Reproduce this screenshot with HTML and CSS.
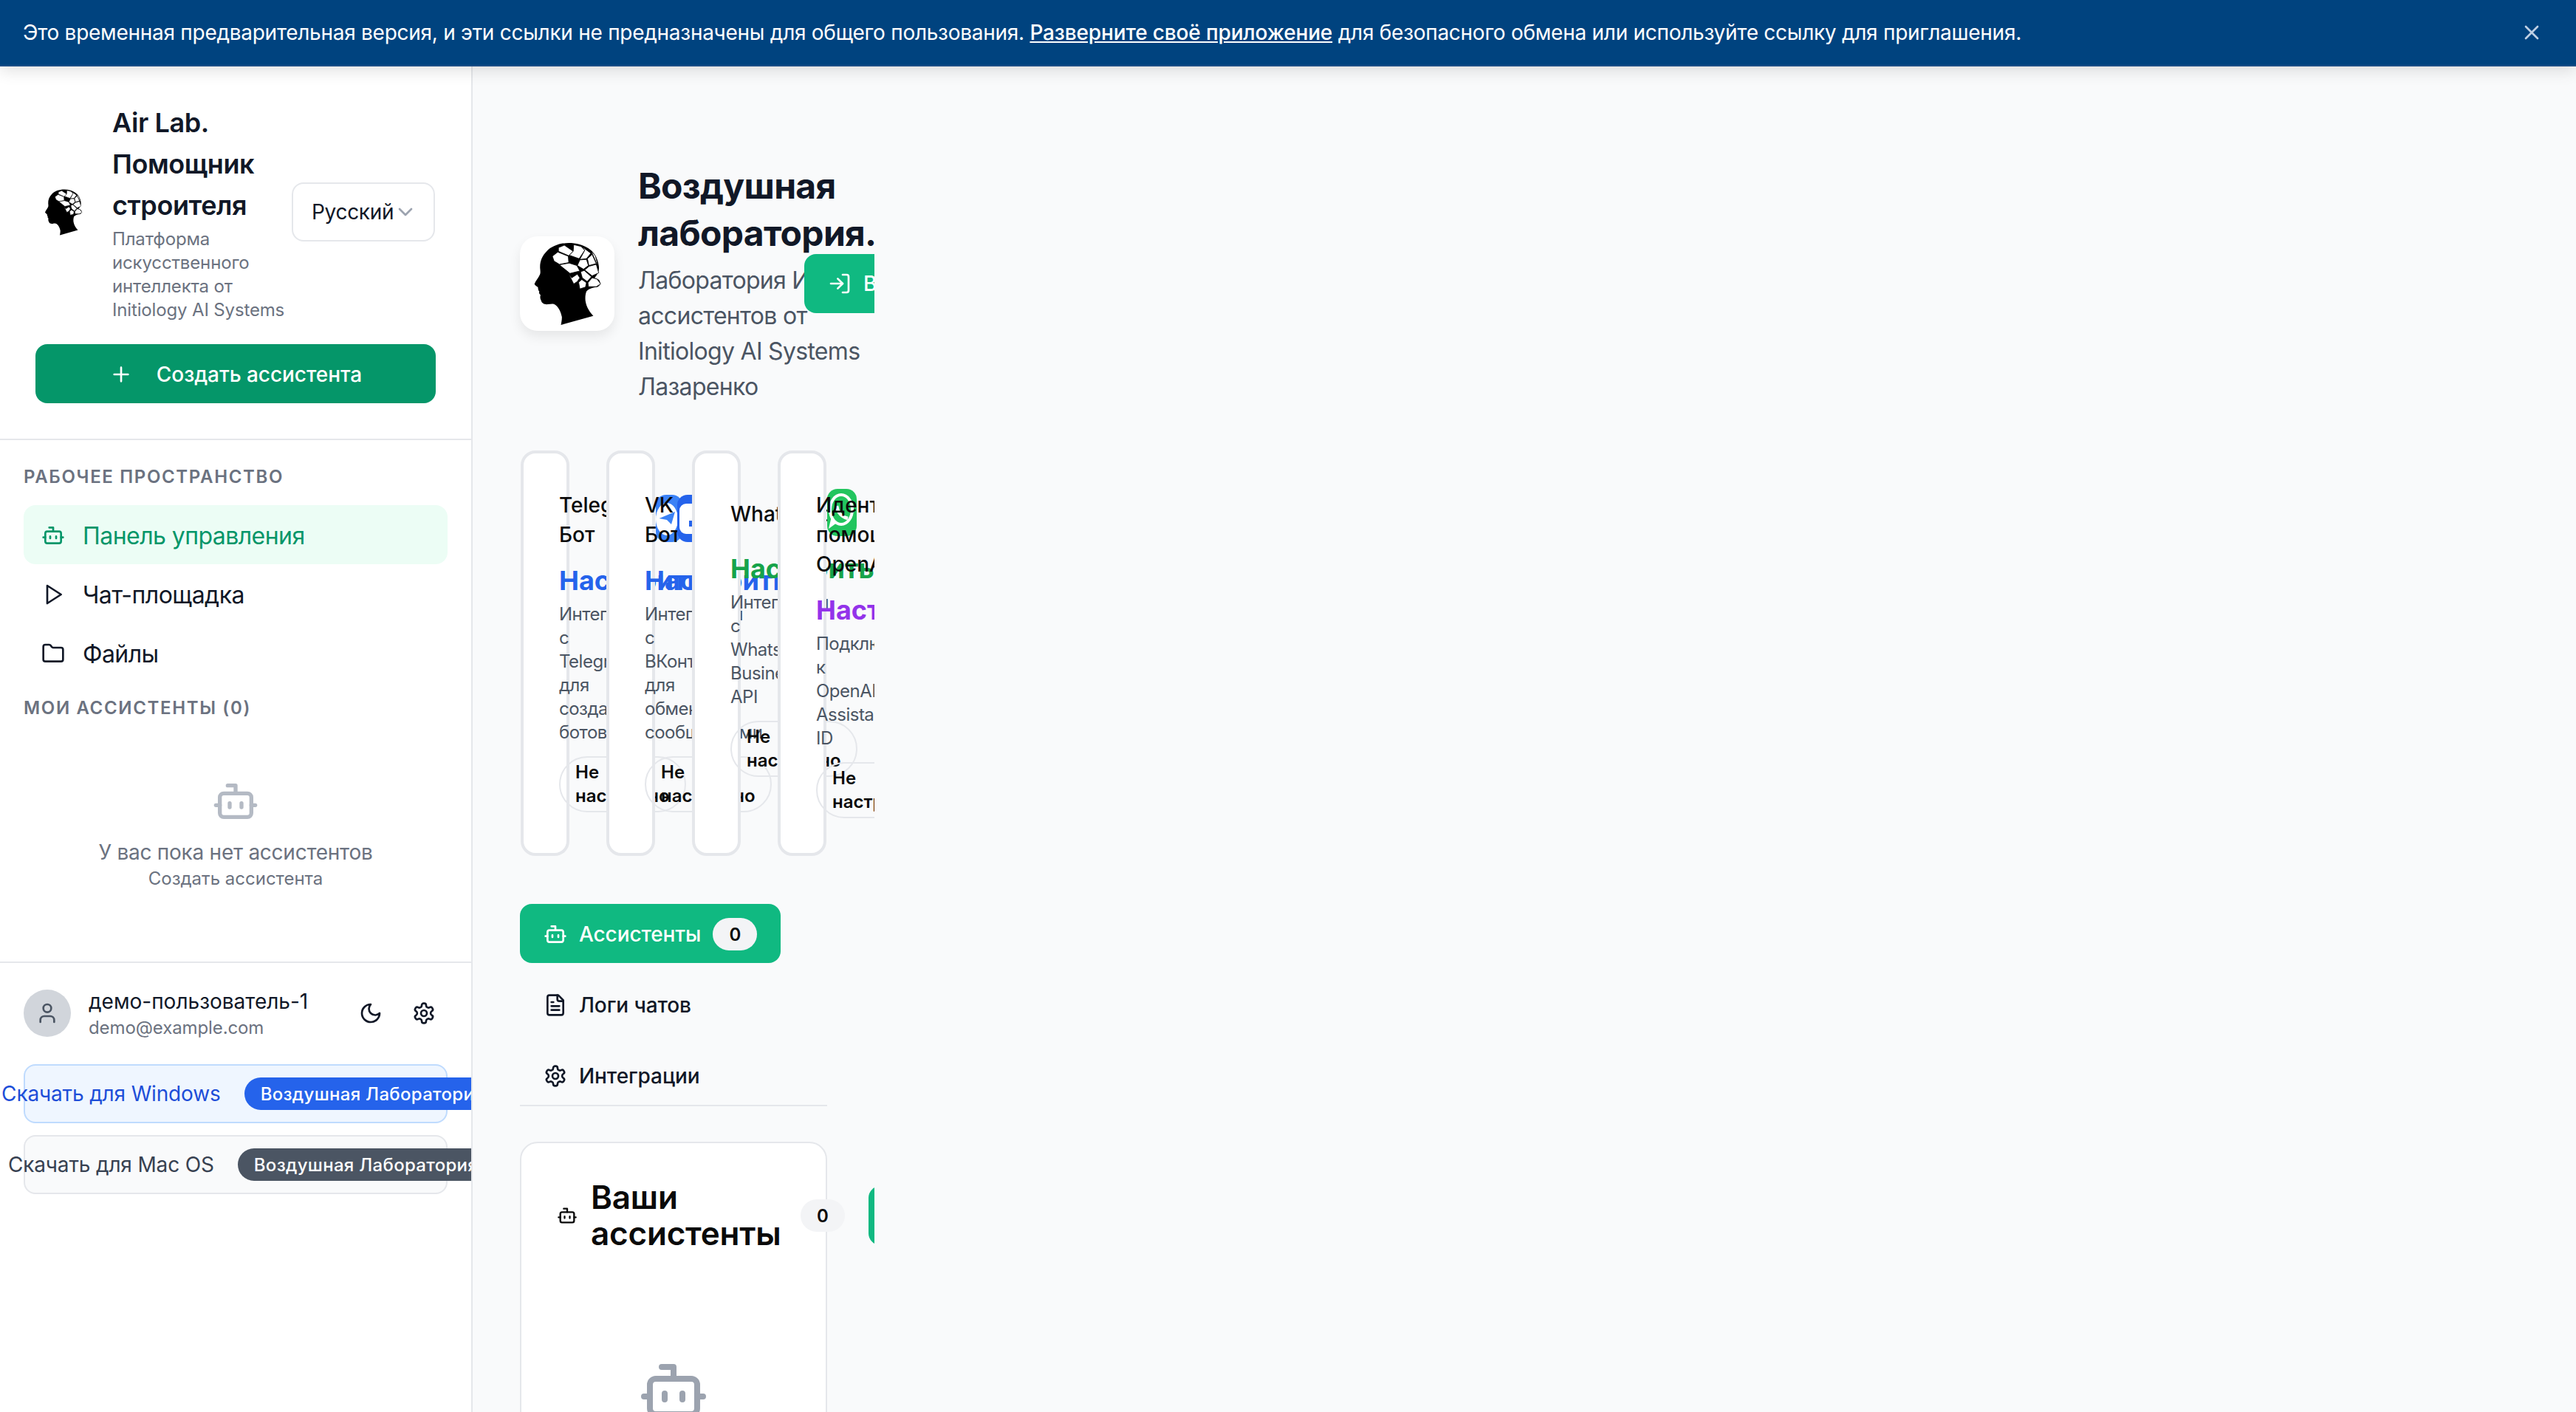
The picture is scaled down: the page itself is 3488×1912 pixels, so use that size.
FILE: index.html
```html
<!DOCTYPE html>
<html lang="ru">
<head>
  <meta charset="UTF-8" />
  <meta name="viewport" content="width=device-width, initial-scale=1.0" />
  <title>Воздушная лаборатория</title>
  <link rel="stylesheet" href="styles.css">
</head>
<body>
  <svg class="sprite" aria-hidden="true">
    <symbol id="i-bot" viewBox="0 0 24 24"><path d="M12 8V4H8"/><rect x="4" y="8" width="16" height="12" rx="2"/><path d="M2 14h2M20 14h2M15 13v2M9 13v2"/></symbol>
    <symbol id="i-play" viewBox="0 0 24 24"><polygon points="6 3 20 12 6 21 6 3"/></symbol>
    <symbol id="i-folder" viewBox="0 0 24 24"><path d="M20 20a2 2 0 0 0 2-2V8a2 2 0 0 0-2-2h-7.9a2 2 0 0 1-1.69-.9L9.6 3.9A2 2 0 0 0 7.93 3H4a2 2 0 0 0-2 2v13a2 2 0 0 0 2 2Z"/></symbol>
    <symbol id="i-moon" viewBox="0 0 24 24"><path d="M12 3a6 6 0 0 0 9 9 9 9 0 1 1-9-9Z"/></symbol>
    <symbol id="i-gear" viewBox="0 0 24 24"><path d="M12.22 2h-.44a2 2 0 0 0-2 2v.18a2 2 0 0 1-1 1.73l-.43.25a2 2 0 0 1-2 0l-.15-.08a2 2 0 0 0-2.73.73l-.22.38a2 2 0 0 0 .73 2.73l.15.1a2 2 0 0 1 1 1.72v.51a2 2 0 0 1-1 1.74l-.15.09a2 2 0 0 0-.73 2.73l.22.38a2 2 0 0 0 2.73.73l.15-.08a2 2 0 0 1 2 0l.43.25a2 2 0 0 1 1 1.73V20a2 2 0 0 0 2 2h.44a2 2 0 0 0 2-2v-.18a2 2 0 0 1 1-1.73l.43-.25a2 2 0 0 1 2 0l.15.08a2 2 0 0 0 2.73-.73l.22-.39a2 2 0 0 0-.73-2.73l-.15-.08a2 2 0 0 1-1-1.74v-.5a2 2 0 0 1 1-1.74l.15-.09a2 2 0 0 0 .73-2.73l-.22-.38a2 2 0 0 0-2.73-.73l-.15.08a2 2 0 0 1-2 0l-.43-.25a2 2 0 0 1-1-1.73V4a2 2 0 0 0-2-2z"/><circle cx="12" cy="12" r="3"/></symbol>
    <symbol id="i-plus" viewBox="0 0 24 24"><path d="M5 12h14M12 5v14"/></symbol>
    <symbol id="i-login" viewBox="0 0 24 24"><path d="M15 3h4a2 2 0 0 1 2 2v14a2 2 0 0 1-2 2h-4"/><polyline points="10 17 15 12 10 7"/><line x1="15" y1="12" x2="3" y2="12"/></symbol>
    <symbol id="i-user" viewBox="0 0 24 24"><path d="M19 21v-2a4 4 0 0 0-4-4H9a4 4 0 0 0-4 4v2"/><circle cx="12" cy="7" r="4"/></symbol>
    <symbol id="i-chevron" viewBox="0 0 24 24"><path d="m6 9 6 6 6-6"/></symbol>
    <symbol id="i-file" viewBox="0 0 24 24"><path d="M15 2H6a2 2 0 0 0-2 2v16a2 2 0 0 0 2 2h12a2 2 0 0 0 2-2V7Z"/><path d="M14 2v4a2 2 0 0 0 2 2h4"/><path d="M10 9H8M16 13H8M16 17H8"/></symbol>
    <symbol id="i-x" viewBox="0 0 24 24"><path d="M18 6 6 18M6 6l12 12"/></symbol>
    <symbol id="i-head" viewBox="105 375 280 340">
      <path fill="#000" d="M250 378 C215 378 180 390 160 412 C140 432 132 455 133 480 C134 490 135 497 133 505 C128 518 116 530 110 545 C112 552 122 555 125 560 C124 567 127 572 130 576 C127 582 131 587 135 590 C132 598 134 606 137 612 C140 624 150 629 165 628 C178 626 188 624 195 630 C210 642 218 660 222 680 C222 692 220 702 218 712 L350 675 C336 660 322 640 318 615 C316 600 318 585 322 575 C335 562 350 560 366 558 C380 552 382 535 370 526 C364 522 358 522 355 520 C368 505 376 490 372 470 C368 440 352 415 330 400 C305 384 280 378 250 378 Z"/>
      <g fill="#fff" stroke="#000" stroke-width="2.5" stroke-linejoin="round">
        <polygon points="183,432 205,415 248,432 250,458 212,465 190,452"/>
        <polygon points="208,397 232,387 268,412 250,430 208,412"/>
        <polygon points="270,385 300,392 315,408 292,442 252,428 268,412"/>
        <polygon points="302,392 340,420 322,442 295,445 315,408"/>
        <polygon points="295,447 322,445 330,470 310,485 285,470"/>
        <polygon points="326,442 345,425 362,462 332,470"/>
        <polygon points="252,460 283,470 295,492 255,502 225,478 212,467"/>
        <polygon points="333,473 362,465 372,500 345,512 315,488"/>
        <polygon points="298,495 313,490 342,516 325,535 305,520"/>
        <polygon points="250,505 262,520 285,505 295,520 285,535 270,545"/>
        <polygon points="290,538 303,527 322,540 318,558 295,565"/>
        <polygon points="328,540 345,520 365,525 380,545 362,556 330,556"/>
        <polygon points="342,410 358,430 368,465 363,460 347,424"/>
      </g>
    </symbol>
  </svg>

  <div class="banner">
    <p class="banner-text">Это временная предварительная версия, и эти ссылки не предназначены для общего пользования. <a href="#">Разверните своё приложение</a> для безопасного обмена или используйте ссылку для приглашения.</p>
    <svg class="icon banner-close"><use href="#i-x"/></svg>
  </div>

  <div class="layout">
    <aside class="sidebar">
      <div class="side-top">
        <div class="brand">
          <div class="brand-logo"><svg class="head-small"><use href="#i-head"/></svg></div>
          <div class="brand-text">
            <h1>Air Lab. Помощник строителя</h1>
            <p>Платформа искусственного интеллекта от Initiology AI Systems</p>
          </div>
          <div class="lang">Русский<svg class="icon lang-chevron"><use href="#i-chevron"/></svg></div>
        </div>
        <button class="create-btn"><svg class="icon"><use href="#i-plus"/></svg>Создать ассистента</button>
      </div>

      <nav class="side-nav">
        <div class="side-label">Рабочее пространство</div>
        <a class="nav-item active" href="#"><svg class="icon"><use href="#i-bot"/></svg>Панель управления</a>
        <a class="nav-item" href="#"><svg class="icon"><use href="#i-play"/></svg>Чат-площадка</a>
        <a class="nav-item" href="#"><svg class="icon"><use href="#i-folder"/></svg>Файлы</a>
        <div class="side-label side-label-2">Мои ассистенты (0)</div>
        <div class="side-empty">
          <svg class="icon empty-icon"><use href="#i-bot"/></svg>
          <p class="empty-title">У вас пока нет ассистентов</p>
          <p class="empty-sub">Создать ассистента</p>
        </div>
      </nav>

      <div class="side-foot">
        <div class="user-row">
          <div class="avatar"><svg class="icon"><use href="#i-user"/></svg></div>
          <div class="user-info">
            <div class="user-name">демо-пользователь-1</div>
            <div class="user-mail">demo@example.com</div>
          </div>
          <div class="user-actions">
            <span class="user-btn"><svg class="icon"><use href="#i-moon"/></svg></span>
            <span class="user-btn"><svg class="icon"><use href="#i-gear"/></svg></span>
          </div>
        </div>
        <div class="dl-btn dl-win">Скачать для Windows<span class="dl-tag">Воздушная Лаборатория</span></div>
        <div class="dl-btn dl-mac">Скачать для Mac OS<span class="dl-tag">Воздушная Лаборатория</span></div>
      </div>
    </aside>

    <main class="main">
      <div class="content">
        <header class="page-head">
          <div class="page-logo"><svg class="head-big"><use href="#i-head"/></svg></div>
          <div class="page-title">
            <h2>Воздушная лаборатория.</h2>
            <p>Лаборатория ИИ ассистентов от Initiology AI Systems Лазаренко</p>
          </div>
          <button class="login-btn"><svg class="icon"><use href="#i-login"/></svg>Войти</button>
        </header>

        <section class="cards">
          <article class="card card-tg">
            <div class="card-top">
              <div class="card-title">Telegram Бот</div>
              <svg class="card-icon" viewBox="0 0 36 64"><rect width="36" height="64" rx="14" fill="#3b82f6"/><ellipse cx="15" cy="33" rx="15" ry="22" fill="#fff"/><polygon points="4.5,32 26,23 21,40 15,34" fill="#3b82f6"/></svg>
            </div>
            <div class="card-value val-blue">Настроить</div>
            <p class="card-desc">Интеграция с Telegram для создания ботов</p>
            <div class="pill">Не настроено</div>
          </article>
          <article class="card card-vk">
            <div class="card-top">
              <div class="card-title">VK Бот</div>
              <svg class="card-icon" viewBox="0 0 40 64"><rect width="40" height="64" rx="14" fill="#2563eb"/><rect x="3" y="12" width="37" height="41" rx="9" fill="#fff"/><rect x="16" y="35" width="4" height="8" fill="#2563eb"/></svg>
            </div>
            <div class="card-value val-blue">Настроить</div>
            <p class="card-desc">Интеграция с ВКонтакте для обмена сообщениями</p>
            <div class="pill">Не настроено</div>
          </article>
          <article class="card card-wa">
            <div class="card-top">
              <div class="card-title">WhatsApp</div>
              <svg class="card-icon" viewBox="0 0 40 64"><rect width="40" height="64" rx="14" fill="#22c55e"/><ellipse cx="19" cy="28" rx="15" ry="20" fill="none" stroke="#fff" stroke-width="4"/><polygon points="2,54 6,37 13,46" fill="#fff"/><path d="M13 23 C14 32 20 38 28 40" fill="none" stroke="#fff" stroke-width="4.5"/></svg>
            </div>
            <div class="card-value val-green">Настроить</div>
            <p class="card-desc">Интеграция с WhatsApp Business API</p>
            <div class="pill">Не настроено</div>
          </article>
          <article class="card">
            <div class="card-top">
              <div class="card-title">Идентификатор помощника OpenAI</div>
            </div>
            <div class="card-value val-purple">Настроить</div>
            <p class="card-desc">Подключите к OpenAI Assistant ID</p>
            <div class="pill">Не настроено</div>
          </article>
        </section>

        <div class="tabs">
          <a class="tab active" href="#"><svg class="icon"><use href="#i-bot"/></svg>Ассистенты<span class="count">0</span></a>
          <a class="tab" href="#"><svg class="icon"><use href="#i-file"/></svg>Логи чатов</a>
          <a class="tab" href="#"><svg class="icon"><use href="#i-gear"/></svg>Интеграции</a>
        </div>

        <section class="panel">
          <div class="panel-head">
            <svg class="icon panel-icon"><use href="#i-bot"/></svg>
            <h3>Ваши ассистенты</h3>
            <span class="count">0</span>
            <button class="panel-btn"></button>
          </div>
          <svg class="icon panel-empty"><use href="#i-bot"/></svg>
        </section>
      </div>
    </main>
  </div>
</body>
</html>
```

FILE: styles.css
```css
* {
  box-sizing: border-box;
  margin: 0;
  padding: 0;
}

html, body {
  height: 1912px;
  overflow: hidden;
}

body {
  font-family: Inter, 'Noto Sans', sans-serif;
  background-color: #f9fafb;
  color: #111827;
  display: flex;
  flex-direction: column;
}

a {
  color: inherit;
  text-decoration: none;
}

button {
  font-family: inherit;
  border: none;
}

.sprite {
  width: 0;
  height: 0;
  position: absolute;
}

.icon {
  width: 32px;
  height: 32px;
  flex: none;
  fill: none;
  stroke: currentColor;
  stroke-width: 2;
  stroke-linecap: round;
  stroke-linejoin: round;
}

/* top banner */
.banner {
  height: 90px;
  flex: none;
  background-color: #00437f;
  border-bottom: 2px solid #1c4f87;
  box-shadow: 0 6px 20px rgba(0, 0, 0, 0.12);
  color: #ffffff;
  display: flex;
  align-items: center;
  justify-content: space-between;
  padding: 0 44px 0 31px;
  position: relative;
  z-index: 5;
}

.banner-text {
  font-size: 28px;
  line-height: 40px;
  letter-spacing: -0.27px;
}

.banner-text a {
  font-weight: 500;
  letter-spacing: -0.15px;
  text-decoration: underline;
}

.banner-close {
  color: #bfd0e4;
}

.layout {
  display: flex;
  flex: 1;
  min-height: 0;
}

/* sidebar */
.sidebar {
  width: 640px;
  flex: none;
  background-color: #ffffff;
  border-right: 2px solid #e5e7eb;
  overflow: hidden;
}

.side-top {
  padding: 48px;
  border-bottom: 2px solid #e5e7eb;
  height: 506px;
}

.brand {
  display: flex;
  align-items: center;
}

.brand-logo {
  width: 76px;
  margin-right: 28px;
  flex: none;
  display: flex;
  justify-content: center;
}

.head-small {
  width: 52px;
  height: 63px;
}

.brand-text {
  width: 235px;
  flex: none;
  margin-right: 8px;
}

.brand-text h1 {
  font-size: 36px;
  line-height: 56px;
  font-weight: 600;
  letter-spacing: -0.4px;
}

.brand-text p {
  margin-top: 2px;
  font-size: 24px;
  line-height: 32px;
  letter-spacing: -0.15px;
  color: #6b7280;
}

.lang {
  width: 194px;
  height: 80px;
  flex: none;
  border: 2px solid #e5e7eb;
  border-radius: 16px;
  display: flex;
  align-items: center;
  padding-left: 25px;
  font-size: 28px;
  letter-spacing: -0.3px;
}

.lang-chevron {
  color: #9ca3af;
}

.create-btn {
  margin-top: 30px;
  width: 542px;
  height: 80px;
  padding-top: 2px;
  background-color: #059669;
  color: #ffffff;
  border-radius: 16px;
  font-size: 28px;
  font-weight: 500;
  letter-spacing: -0.05px;
  display: flex;
  align-items: center;
  justify-content: center;
  gap: 32px;
}

.side-nav {
  height: 706px;
  padding: 34px 32px 0;
}

.side-label {
  font-size: 24px;
  line-height: 32px;
  font-weight: 600;
  letter-spacing: 1.65px;
  text-transform: uppercase;
  color: #6b7280;
  margin-bottom: 22px;
}

.side-label-2 {
  margin-top: 19px;
}

.nav-item {
  height: 80px;
  display: flex;
  align-items: center;
  gap: 24px;
  padding: 2px 0 0 24px;
  border-radius: 16px;
  font-size: 32px;
  letter-spacing: -0.55px;
  color: #111827;
}

.nav-item.active {
  background-color: #ecfdf5;
  color: #059669;
}

.side-empty {
  margin-top: 78px;
  text-align: center;
}

.empty-icon {
  width: 64px;
  height: 64px;
  color: #b4bac4;
}

.empty-title {
  margin-top: 13px;
  font-size: 28px;
  line-height: 40px;
  letter-spacing: -0.25px;
  color: #6b7280;
}

.empty-sub {
  font-size: 24px;
  line-height: 32px;
  color: #6b7280;
}

.side-foot {
  border-top: 2px solid #e5e7eb;
  padding: 32px 32px 0;
}

.user-row {
  display: flex;
  align-items: center;
  gap: 24px;
  margin-bottom: 33px;
}

.avatar {
  width: 64px;
  height: 64px;
  flex: none;
  border-radius: 50%;
  background-color: #d1d5db;
  color: #4b5563;
  display: flex;
  align-items: center;
  justify-content: center;
}

.user-name {
  font-size: 28px;
  line-height: 40px;
}

.user-mail {
  font-size: 24px;
  line-height: 32px;
  letter-spacing: -0.1px;
  color: #6b7280;
}

.user-actions {
  margin-left: auto;
  display: flex;
  gap: 8px;
}

.user-btn {
  width: 64px;
  height: 64px;
  display: flex;
  align-items: center;
  justify-content: center;
}

.dl-btn {
  height: 80px;
  width: 574px;
  border: 2px solid;
  border-radius: 16px;
  margin-bottom: 16px;
  display: flex;
  align-items: center;
  justify-content: center;
  gap: 32px;
  padding-left: 42px;
  font-size: 28px;
  letter-spacing: -0.15px;
  white-space: nowrap;
}

.dl-tag {
  height: 44px;
  flex: none;
  padding: 0 22px;
  border-radius: 22px;
  color: #ffffff;
  font-size: 24px;
  font-weight: 500;
  letter-spacing: 0.3px;
  display: flex;
  align-items: center;
}

.dl-win {
  background-color: #eff6ff;
  border-color: #bfdbfe;
  color: #1d4ed8;
}

.dl-win .dl-tag {
  background-color: #2563eb;
}

.dl-mac {
  background-color: #f9fafb;
  border-color: #e5e7eb;
  color: #374151;
}

.dl-mac .dl-tag {
  background-color: #4b5563;
}

/* main */
.main {
  flex: 1;
  padding: 130px 0 0 40px;
  min-width: 0;
}

.content {
  width: 504px;
  height: 1700px;
  padding-left: 24px;
  overflow: hidden;
}

.page-head {
  display: flex;
  align-items: center;
}

.page-logo {
  width: 128px;
  height: 128px;
  flex: none;
  background-color: #ffffff;
  border-radius: 24px;
  box-shadow: 0 8px 16px rgba(0, 0, 0, 0.08);
  display: flex;
  align-items: center;
  justify-content: center;
  margin-right: 32px;
}

.head-big {
  width: 97px;
  height: 113px;
}

.page-title {
  width: 318px;
  flex: none;
  margin-right: -93px;
}

.page-title h2 {
  font-size: 48px;
  line-height: 64px;
  font-weight: 700;
  letter-spacing: -0.7px;
}

.page-title p {
  margin-top: 8px;
  font-size: 32px;
  line-height: 48px;
  letter-spacing: -0.7px;
  color: #4b5563;
}

.login-btn {
  position: relative;
  flex: none;
  height: 80px;
  padding: 0 32px;
  background-color: #10b981;
  color: #ffffff;
  border-radius: 16px;
  font-size: 28px;
  font-weight: 500;
  display: flex;
  align-items: center;
  gap: 16px;
}

.cards {
  margin-top: 62px;
  padding-left: 1px;
  display: flex;
  gap: 50px;
}

.card {
  position: relative;
  width: 66px;
  flex: none;
  background-color: #ffffff;
  border: 4px solid #e5e7eb;
  border-radius: 20px;
  padding: 48px 0 47px 48px;
}

.card-top {
  display: flex;
  align-items: center;
  width: max-content;
}

.card-title {
  width: min-content;
  padding-top: 2px;
  margin-bottom: -2px;
  font-size: 28px;
  line-height: 40px;
  font-weight: 500;
  color: #0a0a0a;
}

.card-tg .card-title,
.card-wa .card-title {
  width: 131px;
  flex: none;
}

.card-vk .card-title {
  width: 44px;
  flex: none;
}

.card-icon {
  width: 40px;
  height: 64px;
  flex: none;
}

.card-tg .card-icon {
  width: 36px;
}

.card-value {
  margin-top: 16px;
  width: 10px;
  font-size: 36px;
  line-height: 56px;
  font-weight: 700;
}

.val-blue {
  color: #2563eb;
}

.val-green {
  color: #16a34a;
}

.val-purple {
  color: #9333ea;
}

.card-desc {
  margin-top: 2px;
  width: 10px;
  font-size: 24px;
  line-height: 32px;
  letter-spacing: -0.5px;
  color: #4b5563;
}

.pill {
  margin-top: 16px;
  width: min-content;
  padding: 4px 20px;
  border: 2px solid #e5e7eb;
  border-radius: 999px;
  font-size: 24px;
  line-height: 32px;
  font-weight: 600;
  color: #0a0a0a;
}

.tabs {
  margin-top: 65px;
  width: 416px;
  display: flex;
  flex-direction: column;
  align-items: flex-start;
  gap: 16px;
  border-bottom: 2px solid #e5e7eb;
}

.tab {
  height: 80px;
  padding: 2px 32px 0;
  border-radius: 16px;
  display: flex;
  align-items: center;
  gap: 16px;
  font-size: 28px;
  font-weight: 500;
  letter-spacing: -0.1px;
  color: #111827;
}

.tab.active {
  background-color: #10b981;
  color: #ffffff;
}

.count {
  flex: none;
  width: 60px;
  height: 44px;
  border-radius: 22px;
  background-color: #f3f4f6;
  color: #0a0a0a;
  font-size: 24px;
  font-weight: 600;
  display: flex;
  align-items: center;
  justify-content: center;
}

.panel {
  margin-top: 48px;
  width: 416px;
  height: 700px;
  background-color: #ffffff;
  border: 2px solid #e5e7eb;
  border-radius: 24px;
  padding: 49px 48px 48px;
}

.panel-head {
  display: flex;
  align-items: center;
  width: max-content;
}

.panel-icon {
  width: 28px;
  height: 28px;
  margin-right: 18px;
  color: #0a0a0a;
}

.panel-head h3 {
  width: 284px;
  font-size: 44px;
  line-height: 49px;
  font-weight: 600;
  letter-spacing: -0.2px;
  color: #0a0a0a;
}

.panel-btn {
  margin-left: 32px;
  width: 100px;
  height: 80px;
  border-radius: 16px;
  background-color: #10b981;
}

.panel-empty {
  display: block;
  width: 96px;
  height: 96px;
  margin: 140px auto 0;
  color: #9ca3af;
}
```
